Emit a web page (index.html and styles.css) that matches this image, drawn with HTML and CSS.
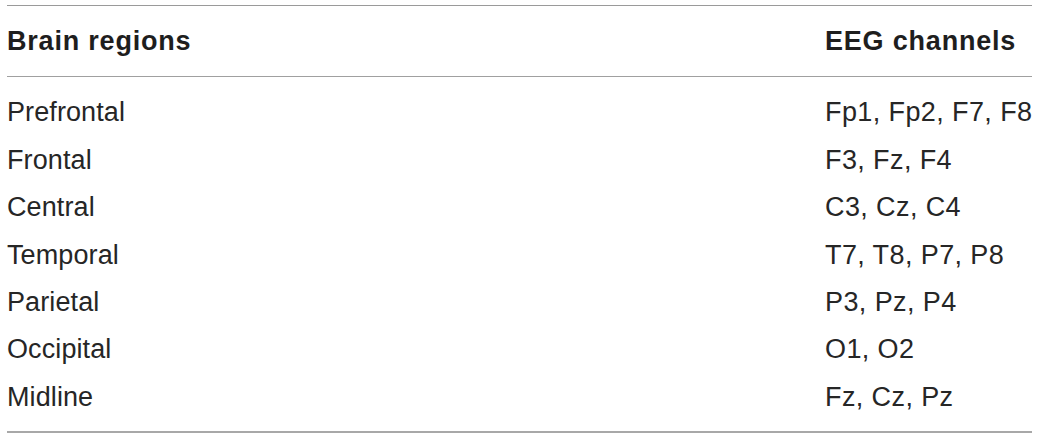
FILE: index.html
```html
<!DOCTYPE html>
<html>
<head>
<meta charset="utf-8">
<link rel="stylesheet" href="styles.css">
</head>
<body>
<div class="table">
  <div class="head">
    <div class="cell">Brain regions</div>
    <div class="cell">EEG channels</div>
  </div>
  <div class="body">
    <div class="cell">Prefrontal</div><div class="cell">Fp1, Fp2, F7, F8</div>
    <div class="cell">Frontal</div><div class="cell">F3, Fz, F4</div>
    <div class="cell">Central</div><div class="cell">C3, Cz, C4</div>
    <div class="cell">Temporal</div><div class="cell">T7, T8, P7, P8</div>
    <div class="cell">Parietal</div><div class="cell">P3, Pz, P4</div>
    <div class="cell">Occipital</div><div class="cell">O1, O2</div>
    <div class="cell">Midline</div><div class="cell">Fz, Cz, Pz</div>
  </div>
</div>
</body>
</html>
```
FILE: styles.css
```css
html, body {
  margin: 0;
  padding: 0;
  background: #ffffff;
}
.table {
  margin: 5px 0 0 7px;
  width: 1025px;
  border-top: 1px solid #9a9a9a;
  border-bottom: 2px solid #a8a8a8;
  font-family: "Liberation Sans", Arial, sans-serif;
  font-size: 27px;
  line-height: 47.4px;
  color: #262626;
}
.head, .body {
  display: grid;
  grid-template-columns: 818px 1fr;
}
.cell {
  white-space: nowrap;
}
.head {
  padding: 12px 0 11px;
  border-bottom: 1px solid #a0a0a0;
  font-weight: bold;
  letter-spacing: 0.8px;
  color: #1e1e1e;
}
.body {
  padding: 12px 0 10px;
  letter-spacing: 0.1px;
}
.body .cell:nth-child(2n) {
  letter-spacing: 0.4px;
}
```
